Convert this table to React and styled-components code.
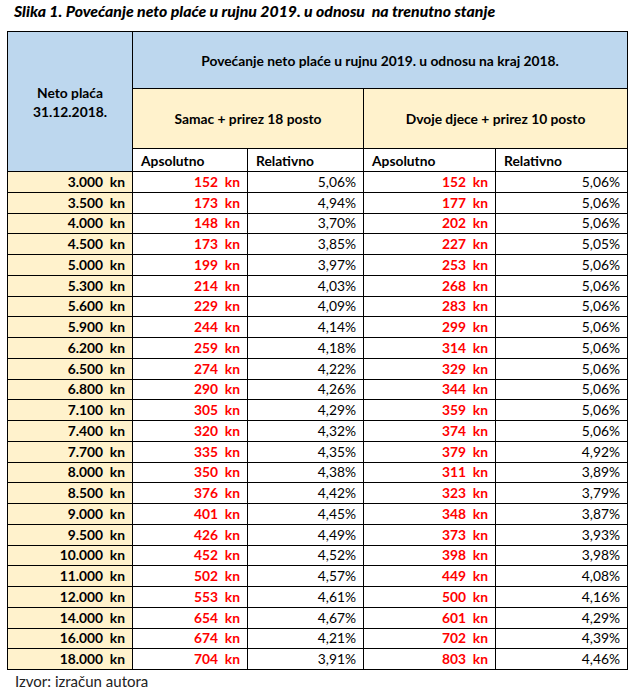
import React from 'react'
import styled, { createGlobalStyle } from 'styled-components'

const GlobalStyle = createGlobalStyle`
  html, body {
    margin: 0;
    padding: 0;
    background: #fff;
  }
  body {
    font-family: Lato, "Liberation Sans", sans-serif;
    color: #000;
  }
`

const rows = [
  ['3.000', 152, '5,06%', 152, '5,06%'],
  ['3.500', 173, '4,94%', 177, '5,06%'],
  ['4.000', 148, '3,70%', 202, '5,06%'],
  ['4.500', 173, '3,85%', 227, '5,05%'],
  ['5.000', 199, '3,97%', 253, '5,06%'],
  ['5.300', 214, '4,03%', 268, '5,06%'],
  ['5.600', 229, '4,09%', 283, '5,06%'],
  ['5.900', 244, '4,14%', 299, '5,06%'],
  ['6.200', 259, '4,18%', 314, '5,06%'],
  ['6.500', 274, '4,22%', 329, '5,06%'],
  ['6.800', 290, '4,26%', 344, '5,06%'],
  ['7.100', 305, '4,29%', 359, '5,06%'],
  ['7.400', 320, '4,32%', 374, '5,06%'],
  ['7.700', 335, '4,35%', 379, '4,92%'],
  ['8.000', 350, '4,38%', 311, '3,89%'],
  ['8.500', 376, '4,42%', 323, '3,79%'],
  ['9.000', 401, '4,45%', 348, '3,87%'],
  ['9.500', 426, '4,49%', 373, '3,93%'],
  ['10.000', 452, '4,52%', 398, '3,98%'],
  ['11.000', 502, '4,57%', 449, '4,08%'],
  ['12.000', 553, '4,61%', 500, '4,16%'],
  ['14.000', 654, '4,67%', 601, '4,29%'],
  ['16.000', 674, '4,21%', 702, '4,39%'],
  ['18.000', 704, '3,91%', 803, '4,46%'],
]

const Page = styled.div`
  width: 639px;
  height: 695px;
  padding: 1px 0 0 0;
  box-sizing: border-box;
`

const Title = styled.h1`
  margin: 0 0 0 14px;
  font-size: 15.8px;
  font-weight: 900;
  font-style: italic;
  line-height: 19px;
  white-space: pre;
`

const Table = styled.table`
  margin: 11px 0 0 7px;
  border-collapse: collapse;
  table-layout: fixed;
  width: 620px;
  font-size: 13.8px;
  font-weight: 700;
`

const Head = styled.th`
  border: 1px solid #000;
  background: ${p => (p.$tone === 'blue' ? '#bdd7ee' : p.$tone === 'beige' ? '#fff2cc' : '#fff')};
  text-align: ${p => p.$align || 'center'};
  padding: ${p => (p.$align === 'left' ? '0 0 0 8px' : '0')};
  font-weight: 700;
  line-height: 19px;
  vertical-align: middle;
`

const HeadRow = styled.tr`
  height: ${p => p.$h}px;
`

const DataRow = styled.tr`
  height: 20.75px;
`

const Cell = styled.td`
  border: 1px solid #000;
  padding: 0 7px 0 0;
  text-align: right;
  line-height: 16px;
  background: ${p => (p.$beige ? '#fff2cc' : '#fff')};
  color: ${p => (p.$red ? '#ff0000' : '#000')};
  font-weight: ${p => (p.$light ? 400 : 700)};
  white-space: pre;
`

const Source = styled.div`
  margin: 2px 0 0 15px;
  font-size: 15px;
  color: #222;
  line-height: 18px;
`

const Money = ({ value }) => <>{value}{'  '}kn</>

const App = () => (
  <Page>
    <GlobalStyle />
    <Title>{'Slika 1. Povećanje neto plaće u rujnu 2019. u odnosu  na trenutno stanje'}</Title>
    <Table>
      <colgroup>
        <col style={{ width: 125 }} />
        <col style={{ width: 115 }} />
        <col style={{ width: 116 }} />
        <col style={{ width: 132 }} />
        <col style={{ width: 132 }} />
      </colgroup>
      <thead>
        <HeadRow $h={57}>
          <Head $tone="blue" rowSpan={3}>
            Neto plaća
            <br />
            31.12.2018.
          </Head>
          <Head $tone="blue" colSpan={4}>
            Povećanje neto plaće u rujnu 2019. u odnosu na kraj 2018.
          </Head>
        </HeadRow>
        <HeadRow $h={60}>
          <Head $tone="beige" colSpan={2}>Samac + prirez 18 posto</Head>
          <Head $tone="beige" colSpan={2}>Dvoje djece + prirez 10 posto</Head>
        </HeadRow>
        <HeadRow $h={23}>
          <Head $align="left">Apsolutno</Head>
          <Head $align="left">Relativno</Head>
          <Head $align="left">Apsolutno</Head>
          <Head $align="left">Relativno</Head>
        </HeadRow>
      </thead>
      <tbody>
        {rows.map(([net, a1, r1, a2, r2]) => (
          <DataRow key={net}>
            <Cell $beige>{net}{'  '}kn</Cell>
            <Cell $red><Money value={a1} /></Cell>
            <Cell $light>{r1}</Cell>
            <Cell $red><Money value={a2} /></Cell>
            <Cell $light>{r2}</Cell>
          </DataRow>
        ))}
      </tbody>
    </Table>
    <Source>Izvor: izračun autora</Source>
  </Page>
)

export default App
